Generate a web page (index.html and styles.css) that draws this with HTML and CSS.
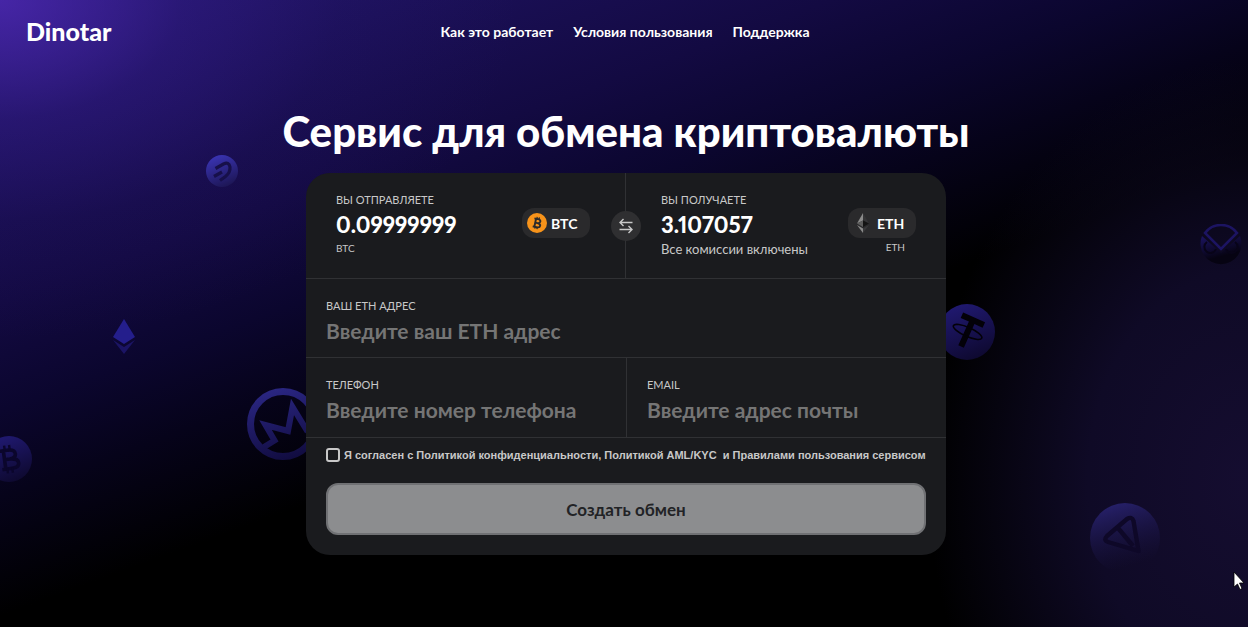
FILE: index.html
```html
<!DOCTYPE html>
<html lang="ru">
<head>
<meta charset="utf-8">
<title>Dinotar</title>
<meta name="viewport" content="width=device-width, initial-scale=1">
<link rel="stylesheet" href="styles.css">
</head>
<body>
<svg class="defs" width="0" height="0" aria-hidden="true">
  <defs>
    <linearGradient id="fade" x1="0.3" y1="0" x2="0.7" y2="1">
      <stop offset="0" stop-color="#3a34b4"/><stop offset="1" stop-color="#1c1552"/>
    </linearGradient>
    <linearGradient id="fadeMid" x1="0.2" y1="0" x2="0.6" y2="1">
      <stop offset="0" stop-color="#211a74"/><stop offset="1" stop-color="#0e0930"/>
    </linearGradient>
    <linearGradient id="fadeRing" gradientUnits="userSpaceOnUse" x1="20" y1="0" x2="40" y2="72">
      <stop offset="0" stop-color="#2b2785"/><stop offset="1" stop-color="#110c40"/>
    </linearGradient>
    <linearGradient id="fadeOut" x1="0.3" y1="0" x2="0.6" y2="1">
      <stop offset="0" stop-color="#27216c"/><stop offset="0.9" stop-color="#1a1446" stop-opacity="0"/>
    </linearGradient>
    <linearGradient id="fadeDark" x1="0" y1="0" x2="0.4" y2="1">
      <stop offset="0" stop-color="#1c1462"/><stop offset="0.8" stop-color="#060312"/>
    </linearGradient>
  </defs>
</svg>

<div class="coins" aria-hidden="true">
  <svg class="coin dash" viewBox="0 0 32 32"><circle cx="16" cy="16" r="16" fill="url(#fade)"/><path d="M9.500 13.500 17.500 9Q23 6.500 24 12Q24.500 17.500 19.500 21.500L14 25.500M8 21.500 16 17" fill="none" stroke="#17104a" stroke-width="3.200"/></svg>
  <svg class="coin ether" viewBox="0 0 24 36"><path d="M12 0 23 18 12 25 1 18Z" fill="#241e8c"/><path d="M1 21 12 28 23 21 12 35Z" fill="#1b1464"/></svg>
  <svg class="coin bitcoin" viewBox="0 0 46 46"><circle cx="23" cy="23" r="23" fill="url(#fadeMid)"/><g transform="rotate(-8 24 23)" fill="none" stroke="#0b062c" stroke-width="3.600"><path d="M15 14H24Q30 14.500 30 18.500 30 22.500 24 23H18M24 23Q32 23.500 32 28 32 32.500 25 32.500H15M18.500 14V32"/><path d="M20 9V14M25 9V14M20 32V37M25 32V37" stroke-width="2.400"/></g></svg>
  <svg class="coin monero" viewBox="0 0 72 72"><circle cx="36" cy="36" r="32.500" fill="none" stroke="url(#fadeRing)" stroke-width="7"/><path d="M17 59 27.500 52.500 18.500 37 41 43 45.500 19 59 41 68 35" fill="none" stroke="url(#fadeRing)" stroke-width="6"/></svg>
  <svg class="coin tether" viewBox="0 0 56 56"><circle cx="28" cy="28" r="28" fill="url(#fadeMid)"/><g transform="rotate(24 29 27)"><path d="M17 12H41V18H32V44H26V18H17Z" fill="#030108"/><ellipse cx="29" cy="28" rx="15.500" ry="4.500" fill="none" stroke="#030108" stroke-width="1.600"/></g></svg>
  <svg class="coin gnosis" viewBox="0 0 42 42"><path d="M5 9A20 20 0 0 1 37 9L21 25Z" fill="none" stroke="#1c1462" stroke-width="2.600"/><path d="M2 12 21 29 40 12A20.500 20.500 0 1 1 2 12Z" fill="url(#fadeDark)"/><path d="M7 18A6 6 0 1 0 16 25M35 18A6 6 0 1 1 26 25" fill="none" stroke="#080418" stroke-width="2"/></svg>
  <svg class="coin tron" viewBox="0 0 70 70"><circle cx="35" cy="35" r="35" fill="url(#fadeOut)"/><path d="M17 33 37 16Q42 13 43.500 18L48.500 48 18 39Q13 37 17 33ZM28 25 43 43" fill="none" stroke="#0e0828" stroke-width="4.400" stroke-linejoin="round"/></svg>
</div>

<header class="header">
  <a class="logo" href="#">Dinotar</a>
  <nav class="nav">
    <a href="#">Как это работает</a>
    <a href="#">Условия пользования</a>
    <a href="#">Поддержка</a>
  </nav>
</header>

<main class="main">
  <h1 class="title">Сервис для обмена криптовалюты</h1>
  <form class="card">
    <div class="exchange">
      <div class="side send">
        <div class="amount">
          <label class="label" for="send">Вы отправляете</label>
          <input class="value" id="send" type="text" value="0.09999999">
          <span class="code">BTC</span>
        </div>
        <div class="picker">
          <button class="pill" type="button">
            <svg width="20" height="20" viewBox="0 0 20 20" aria-hidden="true"><circle cx="10" cy="10" r="10" fill="#f7931a"/><g transform="rotate(12 10 10)" fill="none" stroke="#2a2a2c" stroke-width="1.900"><path d="M6.500 6H10.500Q13 6.200 13 8 13 9.800 10.500 10H8M10.500 10Q13.700 10.200 13.700 12.200 13.700 14.200 10.500 14.200H6.500M8.200 6V14"/><path d="M9 4V6M11.200 4V6M9 14V16M11.200 14V16" stroke-width="1.200"/></g></svg>
            BTC
          </button>
        </div>
      </div>
      <button class="swap" type="button" aria-label="Поменять местами">
        <svg width="14" height="16" viewBox="0 0 14 16" fill="none" stroke="#c8c8c8" stroke-width="1.400" aria-hidden="true"><path d="M13.500 4.500H1M4.500 1 1 4.500 4.500 8M0.500 11.500H13M9.500 8 13 11.500 9.500 15"/></svg>
      </button>
      <div class="side receive">
        <div class="amount">
          <label class="label" for="receive">Вы получаете</label>
          <input class="value" id="receive" type="text" value="3.107057">
          <span class="note">Все комиссии включены</span>
        </div>
        <div class="picker">
          <button class="pill" type="button">
            <svg width="20" height="20" viewBox="0 0 20 20" aria-hidden="true"><path d="M10 0V7.500L4 10.500Z" fill="#8a8a8a"/><path d="M10 0V7.500L16 10.500Z" fill="#343436"/><path d="M4 10.500 10 7.500V14Z" fill="#5c5c5c"/><path d="M16 10.500 10 7.500V14Z" fill="#141414"/><path d="M4 12 10 15.500V20Z" fill="#8a8a8a"/><path d="M16 12 10 15.500V20Z" fill="#39393b"/></svg>
            ETH
          </button>
          <span class="code">ETH</span>
        </div>
      </div>
    </div>
    <div class="field">
      <label class="label" for="address">Ваш ETH адрес</label>
      <input class="entry" id="address" type="text" placeholder="Введите ваш ETH адрес">
    </div>
    <div class="pair">
      <div class="field">
        <label class="label" for="phone">Телефон</label>
        <input class="entry" id="phone" type="tel" placeholder="Введите номер телефона">
      </div>
      <div class="field">
        <label class="label" for="email">Email</label>
        <input class="entry" id="email" type="email" placeholder="Введите адрес почты">
      </div>
    </div>
    <div class="submit">
      <div class="consent">
        <input class="check" id="agree" type="checkbox">
        <label for="agree">Я согласен с <a href="#">Политикой конфиденциальности</a>, <a href="#">Политикой AML/KYC</a>&nbsp; и <a href="#">Правилами пользования сервисом</a></label>
      </div>
      <button class="create" type="submit" disabled>Создать обмен</button>
    </div>
  </form>
</main>
<svg class="cursor" width="12" height="19" viewBox="0 0 12 19" aria-hidden="true"><path d="M1 1V16L4.500 13 7 18.500 9 17.500 6.500 12H11Z" fill="#fff" stroke="#000" stroke-width="0.800"/></svg>
</body>
</html>
```
FILE: styles.css
```css
* { box-sizing: border-box; }

body {
  margin: 0;
  min-height: 100vh;
  position: relative;
  overflow: hidden;
  font-family: Lato, "Open Sans", sans-serif;
  color: #fff;
  background:
    radial-gradient(ellipse 520px 340px at 0 0, rgba(84, 44, 190, 0.7), rgba(64, 34, 160, 0.3) 35%, rgba(60, 34, 150, 0.08) 65%, transparent),
    radial-gradient(ellipse 320px 420px at 100% 480px, #150d30, #0f0a26 50%, transparent),
    linear-gradient(160deg, #24166e 0%, #1b1058 14%, #130a42 28%, #0b062e 38%, #06031a 46%, #000 57%);
}

a { color: inherit; text-decoration: none; }
button, input { font: inherit; color: inherit; }

.defs { position: absolute; }
.coins { position: absolute; inset: 0; overflow: hidden; }
.coin { position: absolute; }
.dash { left: 206px; top: 155px; width: 32px; }
.ether { left: 112px; top: 319px; width: 24px; }
.bitcoin { left: -14px; top: 436px; width: 46px; }
.monero { left: 247px; top: 388px; width: 72px; }
.tether { right: 253px; top: 304px; width: 56px; }
.gnosis { right: 6px; top: 224px; width: 42px; }
.tron { right: 88px; top: 503px; width: 70px; }

.header {
  position: relative;
  display: grid;
  grid-template-columns: 1fr auto 1fr;
  align-items: center;
  height: 62px;
  padding: 0 24px 0 26px;
}
.logo { font-size: 25px; line-height: 32px; font-weight: 900; }
.nav { display: flex; gap: 20px; font-size: 14px; font-weight: 700; }

.main {
  position: relative;
  display: flex;
  flex-direction: column;
  align-items: center;
  padding: 41px 0 72px 4px;
}
.title { margin: 0 0 14px; font-size: 42px; line-height: 56px; font-weight: 900; }

.card {
  width: 100%;
  max-width: 640px;
  border-radius: 24px;
  background: #1a1b1e;
}

.exchange {
  position: relative;
  display: grid;
  grid-template-columns: 1fr 1fr;
  border-bottom: 1px solid #303134;
}
.side { display: flex; justify-content: space-between; padding: 20px 30px 21px 35px; }
.send { padding: 20px 35px 21px 30px; border-right: 1px solid #303134; }
.amount { display: flex; flex-direction: column; min-width: 0; }
.label {
  font-size: 11px;
  line-height: 14px;
  text-transform: uppercase;
  color: #c8c8c8;
}
.value {
  width: 150px;
  height: 34px;
  padding: 0;
  border: 0;
  background: none;
  font-size: 22px;
  font-weight: 900;
  font-variant-numeric: proportional-nums;
}
.code { font-size: 10px; line-height: 14px; color: #c8c8c8; }
.note { font-size: 13px; line-height: 16px; color: #c8c8c8; }
.picker { display: flex; flex-direction: column; align-items: flex-end; gap: 2px; padding-top: 15px; }
.picker .code { padding-right: 11px; }
.pill {
  display: flex;
  align-items: center;
  gap: 4px;
  width: 68px;
  height: 30px;
  padding: 0 5px;
  border: 0;
  border-radius: 12px;
  background: #2a2a2c;
  font-size: 14px;
  font-weight: 700;
}
.swap {
  position: absolute;
  left: 50%;
  top: 50%;
  transform: translate(-50%, -50%);
  display: grid;
  place-items: center;
  width: 30px;
  height: 30px;
  padding: 0;
  border: 0;
  border-radius: 50%;
  background: #2f2f31;
}

.field {
  display: flex;
  flex-direction: column;
  padding: 20px 20px 10px;
  border-bottom: 1px solid #303134;
}
.entry {
  width: 100%;
  height: 34px;
  padding: 0;
  border: 0;
  background: none;
  font-size: 21px;
  font-weight: 700;
}
.entry::placeholder { color: #757575; opacity: 1; }
.pair { display: grid; grid-template-columns: 1fr 1fr; }
.pair .field + .field { border-left: 1px solid #303134; }
.pair .entry { height: 35px; }

.submit { display: flex; flex-direction: column; gap: 20px; padding: 9px 20px 20px; }
.consent {
  display: flex;
  align-items: center;
  gap: 4px;
  font-family: "Liberation Sans", Arial, sans-serif;
  font-size: 11px;
  line-height: 16px;
  font-weight: 700;
  color: #c8c8c8;
}
.check {
  appearance: none;
  flex: none;
  width: 14px;
  height: 14px;
  margin: 0;
  border: 2px solid #c8c8c8;
  border-radius: 3px;
}
.create {
  height: 52px;
  border: 2px solid #707174;
  border-radius: 12px;
  background: #8c8d8f;
  color: #222326;
  font-size: 17px;
  font-weight: 700;
}

.cursor { position: absolute; right: 3px; bottom: 37px; }
```
